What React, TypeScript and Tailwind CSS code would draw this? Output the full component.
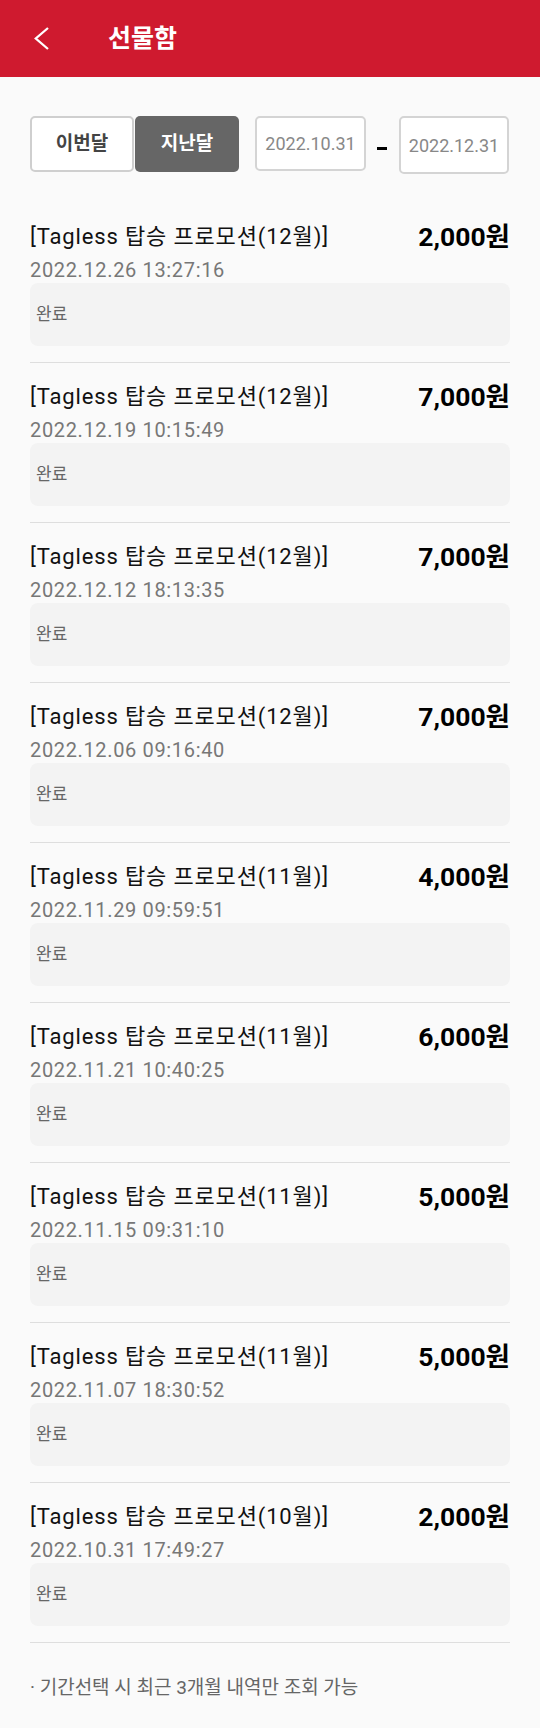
import React from "react";

const items = [
  { m: "12", d: "2022.12.26 13:27:16", a: "2,000" },
  { m: "12", d: "2022.12.19 10:15:49", a: "7,000" },
  { m: "12", d: "2022.12.12 18:13:35", a: "7,000" },
  { m: "12", d: "2022.12.06 09:16:40", a: "7,000" },
  { m: "11", d: "2022.11.29 09:59:51", a: "4,000" },
  { m: "11", d: "2022.11.21 10:40:25", a: "6,000" },
  { m: "11", d: "2022.11.15 09:31:10", a: "5,000" },
  { m: "11", d: "2022.11.07 18:30:52", a: "5,000" },
  { m: "10", d: "2022.10.31 17:49:27", a: "2,000" },
];

export default function App() {
  return (
    <div className="min-h-screen bg-[#fafafa] font-[Roboto,'Noto_Sans_CJK_KR',sans-serif]">
      <header className="flex h-[77px] items-center bg-[#cf1a2f] pl-[34px]">
        <svg width="16" height="24" viewBox="0 0 16 24" className="shrink-0">
          <polyline
            points="14,1 1.8,11.5 14,22"
            fill="none"
            stroke="#ffffff"
            strokeWidth="2.3"
          />
        </svg>
        <h1 className="ml-[58px] text-[25px] font-bold leading-[30px] text-white">선물함</h1>
      </header>

      <div className="px-[30px]">
        <div className="flex items-start pt-[39px]">
          <button className="flex h-[56px] w-[104px] items-center justify-center rounded-[5px] border-2 border-[#cfcfcf] bg-white text-[19px] font-bold text-[#444]">
            이번달
          </button>
          <button className="ml-[1px] flex h-[56px] w-[104px] items-center justify-center rounded-[5px] bg-[#666666] text-[19px] font-bold text-white">
            지난달
          </button>
          <div className="ml-[16px] flex h-[55px] w-[111px] items-center justify-center rounded-[5px] border-2 border-[#d4d4d4] bg-white text-[18px] text-[#888]">
            2022.10.31
          </div>
          <div className="ml-[11px] mt-[31px] h-[3px] w-[10px] bg-black" />
          <div className="ml-[12px] flex h-[58px] w-[110px] items-center justify-center rounded-[5px] border-2 border-[#d4d4d4] bg-white text-[18px] text-[#888]">
            2022.12.31
          </div>
        </div>

        <div className="mt-[29px]">
          {items.map((it, i) => (
            <div key={i} className="border-b border-[#dedede] pb-[16px] pt-[20px]">
              <div className="flex items-start justify-between">
                <div className="text-[22px] leading-[28px] tracking-[0.85px] text-[#111]">
                  [Tagless 탑승 프로모션({it.m}월)]
                </div>
                <div className="text-[26.5px] font-bold leading-[28px] text-black">{it.a}원</div>
              </div>
              <div className="mt-[6px] text-[20px] leading-[26px] tracking-[0.65px] text-[#777]">{it.d}</div>
              <div className="flex h-[63px] items-center rounded-[8px] bg-[#f3f3f3] pl-[6px] text-[17px] text-[#666]">
                완료
              </div>
            </div>
          ))}
        </div>

        <p className="mt-[33px] text-[19px] leading-[24px] text-[#666]">
          · 기간선택 시 최근 3개월 내역만 조회 가능
        </p>
      </div>
    </div>
  );
}
